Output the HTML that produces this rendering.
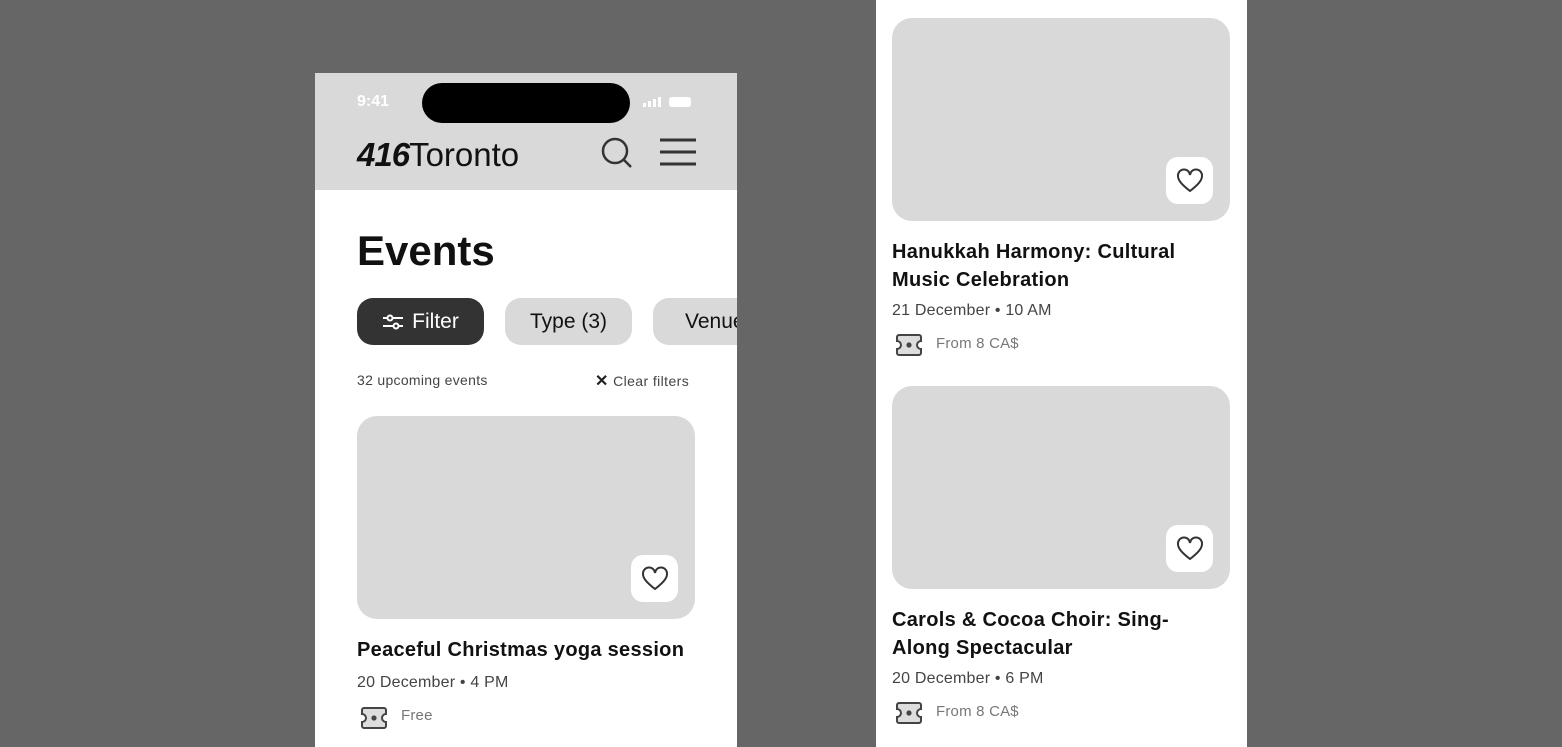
<!DOCTYPE html>
<html><head><style>
*{margin:0;padding:0;box-sizing:border-box}
body{width:1562px;height:747px;background:#666;position:relative;overflow:hidden;font-family:"Liberation Sans",sans-serif;color:#111}
.a{position:absolute}
.ph{background:#fff;overflow:hidden}
.img{background:#d9d9d9;border-radius:20px}
.heart{width:47px;height:47px;background:#fff;border-radius:12px;display:flex;align-items:center;justify-content:center}
.t{font-weight:bold;font-size:20px;line-height:28px;letter-spacing:0.3px}
.d{font-size:16px;color:#444;letter-spacing:0.2px}
.p{font-size:15px;color:#777;letter-spacing:0.2px}
</style></head><body>
<div class="a ph" style="left:315px;top:73px;width:422px;height:674px">
 <div class="a" style="left:0;top:0;width:422px;height:117px;background:#d9d9d9"></div>
 <div class="a" style="left:42px;top:20px;color:#fff;font-size:16px;font-weight:bold">9:41</div>
 <div class="a" style="left:107px;top:10px;width:208px;height:40px;background:#000;border-radius:20px"></div>
 <svg class="a" style="left:328px;top:23px" width="52" height="12"><rect x="0" y="7" width="3" height="4" fill="#fff"/><rect x="5" y="5" width="3" height="6" fill="#fff"/><rect x="10" y="3" width="3" height="8" fill="#fff"/><rect x="15" y="1" width="3" height="10" fill="#fff"/><rect x="26" y="1" width="22" height="10" rx="3" fill="#fff"/></svg>
 <div class="a" style="left:42px;top:63px;font-size:33px;letter-spacing:0px"><b style="font-style:italic;letter-spacing:-1px">416</b>Toronto</div>
 <svg class="a" style="left:284px;top:62px" width="36" height="36" fill="none" stroke="#333" stroke-width="2.5"><circle cx="16" cy="16" r="12"/><line x1="25" y1="25" x2="32" y2="32"/></svg>
 <svg class="a" style="left:344px;top:64px" width="38" height="30" stroke="#333" stroke-width="3"><line x1="1" y1="3" x2="37" y2="3"/><line x1="1" y1="15" x2="37" y2="15"/><line x1="1" y1="27" x2="37" y2="27"/></svg>
 <div class="a" style="left:42px;top:154px;font-size:42px;font-weight:bold;letter-spacing:0px">Events</div>
 <div class="a" style="left:42px;top:225px;width:127px;height:47px;background:#333;border-radius:16px;color:#fff;font-size:21px;display:flex;align-items:center;justify-content:center;gap:8px">
  <svg width="22" height="18" stroke="#fff" stroke-width="2" fill="none"><line x1="1" y1="5" x2="21" y2="5"/><line x1="1" y1="13" x2="21" y2="13"/><circle cx="8" cy="5" r="2.5" fill="#333"/><circle cx="14" cy="13" r="2.5" fill="#333"/></svg>Filter</div>
 <div class="a" style="left:190px;top:225px;width:127px;height:47px;background:#d9d9d9;border-radius:16px;font-size:21px;display:flex;align-items:center;justify-content:center">Type (3)</div>
 <div class="a" style="left:338px;top:225px;width:127px;height:47px;background:#d9d9d9;border-radius:16px;font-size:21px;padding:12px 0 0 32px">Venue</div>
 <div class="a" style="left:42px;top:299px;font-size:14px;color:#444;letter-spacing:0.3px">32 upcoming events</div>
 <div class="a" style="left:280px;top:298px;font-size:14px;color:#444;letter-spacing:0.4px"><b style="font-size:16px;color:#222">✕</b> Clear filters</div>
 <div class="a img" style="left:42px;top:343px;width:338px;height:203px"></div>
 <div class="a heart" style="left:316px;top:482px"><svg width="28" height="26" fill="none" stroke="#333" stroke-width="2"><path d="M14 23C5 16 2 12 2 8a6 6 0 0 1 12-1 6 6 0 0 1 12 1c0 4-3 8-12 15z"/></svg></div>
 <div class="a t" style="left:42px;top:563px">Peaceful Christmas yoga session</div>
 <div class="a d" style="left:42px;top:601px">20 December • 4 PM</div>
 <svg class="a" style="left:44px;top:632px" width="30" height="26" fill="#ddd" stroke="#444" stroke-width="2"><path d="M5 3h20a2 2 0 0 1 2 2v4a4 4 0 0 0 0 8v4a2 2 0 0 1-2 2H5a2 2 0 0 1-2-2v-4a4 4 0 0 0 0-8V5a2 2 0 0 1 2-2z"/><circle cx="15" cy="13" r="1.6" fill="#444"/></svg>
 <div class="a p" style="left:86px;top:634px">Free</div>
</div>
<div class="a ph" style="left:876px;top:0;width:371px;height:747px">
 <div class="a img" style="left:16px;top:18px;width:338px;height:203px"></div>
 <div class="a heart" style="left:290px;top:157px"><svg width="28" height="26" fill="none" stroke="#333" stroke-width="2"><path d="M14 23C5 16 2 12 2 8a6 6 0 0 1 12-1 6 6 0 0 1 12 1c0 4-3 8-12 15z"/></svg></div>
 <div class="a t" style="left:16px;top:238px">Hanukkah Harmony: Cultural<br>Music Celebration</div>
 <div class="a d" style="left:16px;top:302px">21 December • 10 AM</div>
 <svg class="a" style="left:18px;top:332px" width="30" height="26" fill="#ddd" stroke="#444" stroke-width="2"><path d="M5 3h20a2 2 0 0 1 2 2v4a4 4 0 0 0 0 8v4a2 2 0 0 1-2 2H5a2 2 0 0 1-2-2v-4a4 4 0 0 0 0-8V5a2 2 0 0 1 2-2z"/><circle cx="15" cy="13" r="1.6" fill="#444"/></svg>
 <div class="a p" style="left:60px;top:335px">From 8 CA$</div>
 <div class="a img" style="left:16px;top:386px;width:338px;height:203px"></div>
 <div class="a heart" style="left:290px;top:525px"><svg width="28" height="26" fill="none" stroke="#333" stroke-width="2"><path d="M14 23C5 16 2 12 2 8a6 6 0 0 1 12-1 6 6 0 0 1 12 1c0 4-3 8-12 15z"/></svg></div>
 <div class="a t" style="left:16px;top:606px">Carols &amp; Cocoa Choir: Sing-<br>Along Spectacular</div>
 <div class="a d" style="left:16px;top:670px">20 December • 6 PM</div>
 <svg class="a" style="left:18px;top:700px" width="30" height="26" fill="#ddd" stroke="#444" stroke-width="2"><path d="M5 3h20a2 2 0 0 1 2 2v4a4 4 0 0 0 0 8v4a2 2 0 0 1-2 2H5a2 2 0 0 1-2-2v-4a4 4 0 0 0 0-8V5a2 2 0 0 1 2-2z"/><circle cx="15" cy="13" r="1.6" fill="#444"/></svg>
 <div class="a p" style="left:60px;top:703px">From 8 CA$</div>
</div>
</body></html>
